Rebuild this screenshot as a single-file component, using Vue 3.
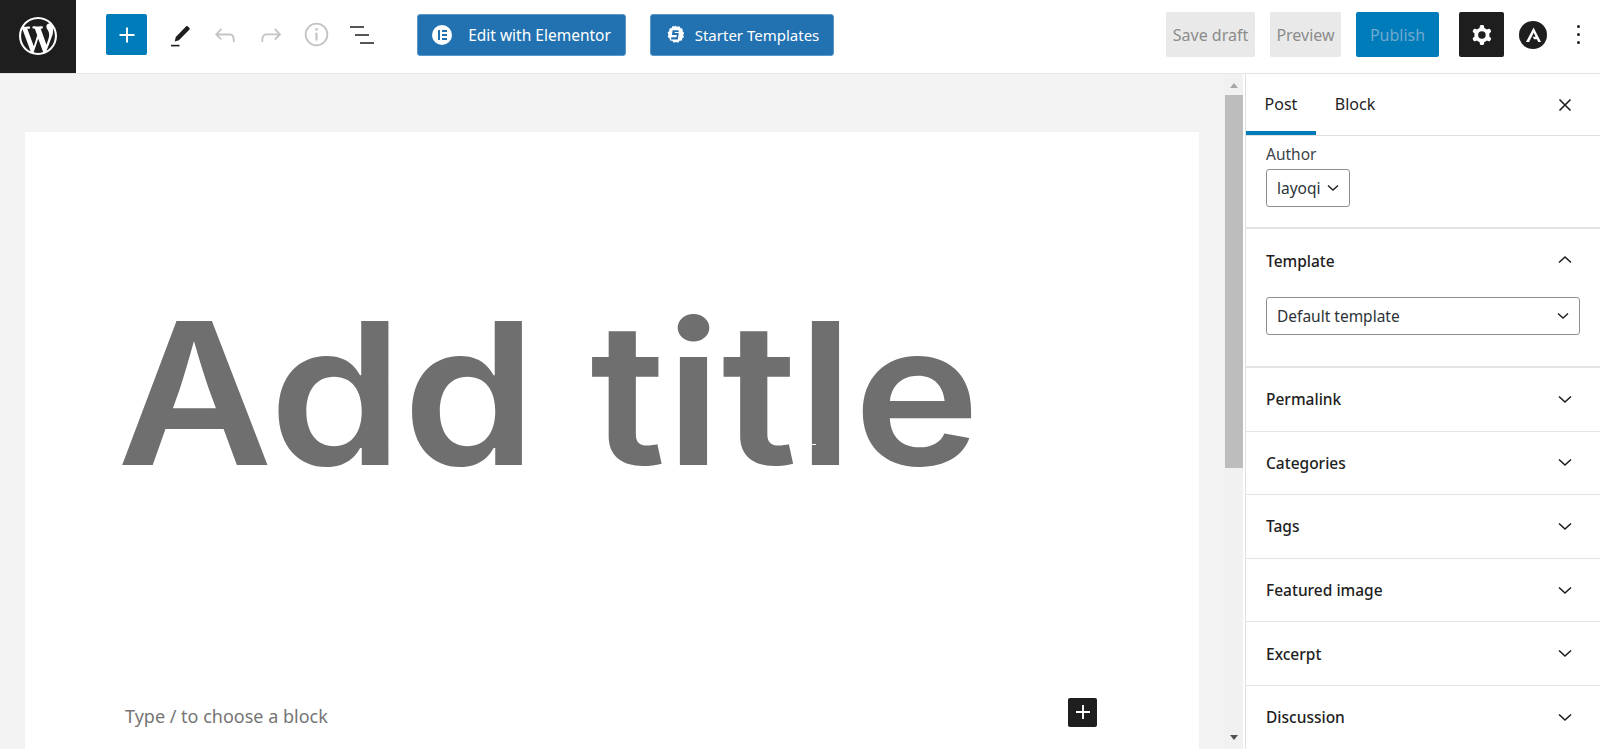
<template>
  <div class="editor">
    <header class="toolbar">
      <div class="left">
        <div class="wp">
          <svg viewBox="0 0 20 20" width="38" height="38" fill="#fff"><path :d="wpLogo" /></svg>
        </div>
        <button class="add">
          <svg viewBox="0 0 24 24" width="30" height="30" fill="#fff"><path d="M18 11.2h-5.2V6h-1.6v5.2H6v1.6h5.2V18h1.6v-5.2H18z" /></svg>
        </button>
        <div class="tools">
          <svg viewBox="0 0 24 24" width="24" height="28"><path d="M19.6 3.2l1.9 1.9c.4.4.4 1 0 1.4L10.9 17.2l-4.2 1.2 1.1-4.3L18.2 3.2c.4-.4 1-.4 1.4 0z" fill="#1e1e1e" /><path d="M3 22.6h8.5" stroke="#1e1e1e" stroke-width="1.6" fill="none" /></svg>
          <svg viewBox="0 0 24 24" width="30" height="30" fill="#c4c4c4"><path d="M18.3 11.7c-.6-.6-1.4-.9-2.3-.9H6.7l2.9-3.3-1.1-1-4.5 5L8.5 16l1-1-2.7-2.7H16c.5 0 .9.2 1.3.5 1 1 1 3.4 1 4.5v.3h1.5v-.2c0-1.5 0-4.3-1.5-5.7z" /></svg>
          <svg viewBox="0 0 24 24" width="30" height="30" fill="#c4c4c4"><path d="M15.6 6.5l-1.1 1 2.9 3.3H8c-.9 0-1.7.3-2.3.9-1.4 1.5-1.4 4.2-1.4 5.6v.2h1.5v-.3c0-1.1 0-3.5 1-4.5.3-.3.7-.5 1.3-.5h9.2L14.5 15l1.1 1.1 4.6-4.6-4.6-5z" /></svg>
          <svg viewBox="0 0 24 24" width="29" height="29" fill="none" stroke="#c4c4c4" stroke-width="1.5"><circle cx="12" cy="12" r="9" /><path d="M12 10.5v6.5" stroke-width="1.8" /><path d="M12 6.6v2.2" stroke-width="2" /></svg>
          <svg viewBox="0 0 24 20" width="24" height="20" fill="none" stroke="#1e1e1e" stroke-width="1.6"><path d="M0 2h14M5 10h14M10 18h14" /></svg>
        </div>
        <button class="ext first">
          <span class="el-icon"><i></i><b></b></span>
          <span>Edit with Elementor</span>
        </button>
        <button class="ext second">
          <svg viewBox="0 0 20 20" width="20" height="20"><path d="M10 .5l2 1.2 2.4-.5 1 1.9 2.3.8-.1 2.3 1.6 1.7-1.2 2 1.2 2-1.9 1.4-.3 2.3-2.4.2-1.4 1.9-2.2-.8-2.2.8-1.5-1.9-2.3-.3-.5-2.3-1.9-1.4.9-2.1-.9-2.1 1.7-1.6V3.7l2.3-.6 1-2 2.4.5z" fill="#fff" /><path d="M13.8 5.2H7.6L6.9 10h4.9l-.3 2.2H6.4l-.4 2.4h6.8l1-6.7H9.6l.2-1h3.7z" fill="#2271b1" /></svg>
          <span>Starter Templates</span>
        </button>
      </div>
      <div class="right">
        <button class="muted draft">Save draft</button>
        <button class="muted preview">Preview</button>
        <button class="publish">Publish</button>
        <button class="gear">
          <svg viewBox="0 0 24 24" width="30" height="30" fill="#fff"><path fill-rule="evenodd" d="M10.289 4.836A1 1 0 0111.275 4h1.306a1 1 0 01.987.836l.244 1.466c.787.26 1.503.679 2.108 1.218l1.393-.522a1 1 0 011.216.437l.653 1.13a1 1 0 01-.23 1.273l-1.148.944a6.025 6.025 0 010 2.435l1.149.946a1 1 0 01.23 1.272l-.653 1.13a1 1 0 01-1.216.437l-1.394-.522c-.605.54-1.32.958-2.108 1.218l-.244 1.466a1 1 0 01-.987.836h-1.306a1 1 0 01-.986-.836l-.244-1.466a5.995 5.995 0 01-2.108-1.218l-1.394.522a1 1 0 01-1.217-.436l-.653-1.131a1 1 0 01.23-1.272l1.149-.946a6.026 6.026 0 010-2.435l-1.148-.944a1 1 0 01-.23-1.272l.653-1.131a1 1 0 011.217-.437l1.393.522a5.994 5.994 0 012.108-1.218l.244-1.466zM14.929 12a3 3 0 11-6 0 3 3 0 016 0z" /></svg>
        </button>
        <svg class="astra" viewBox="0 0 28 28" width="28" height="28"><circle cx="14" cy="14" r="14" fill="#1e1e1e" /><path d="M14.6 6.6L7 21h3.1l4.6-9.2 1.9 3.9h-2.9l1.4 2.6h2.8l1.3 2.7H22z" fill="#fff" /></svg>
        <div class="kebab"><i></i><i></i><i></i></div>
      </div>
    </header>

    <div class="body">
      <main class="content">
        <section class="canvas">
          <h1 class="title">Add title</h1>
          <i class="caret"></i>
          <div class="block-row">
            <span class="hint">Type / to choose a block</span>
            <button class="inline-add">
              <svg viewBox="0 0 24 24" width="28" height="28" fill="#fff"><path d="M18 11.2h-5.2V6h-1.6v5.2H6v1.6h5.2V18h1.6v-5.2H18z" /></svg>
            </button>
          </div>
        </section>
      </main>

      <div class="scrollbar">
        <i class="arrow up"></i>
        <div class="thumb"></div>
        <i class="arrow down"></i>
      </div>

      <aside class="sidebar">
        <div class="tabs">
          <div class="tab active">Post</div>
          <div class="tab">Block</div>
          <svg class="close" viewBox="0 0 24 24" width="24" height="24" fill="none" stroke="#1e1e1e" stroke-width="1.6"><path d="M6.5 6.5l11 11M17.5 6.5l-11 11" /></svg>
        </div>

        <div class="author">
          <div class="lbl">Author</div>
          <div class="select small-select">
            <span>layoqi</span>
            <svg viewBox="0 0 12 8" width="12" height="8" fill="none" stroke="#1e1e1e" stroke-width="1.4"><path :d="chevDown" /></svg>
          </div>
        </div>

        <div class="template">
          <div class="sec-head">
            <span>Template</span>
            <svg viewBox="0 0 14 9" width="14" height="9" fill="none" stroke="#1e1e1e" stroke-width="1.6"><path d="M1 7.5l6-5.5 6 5.5" /></svg>
          </div>
          <div class="select wide-select">
            <span>Default template</span>
            <svg viewBox="0 0 12 8" width="12" height="8" fill="none" stroke="#1e1e1e" stroke-width="1.4"><path :d="chevDown" /></svg>
          </div>
        </div>

        <div v-for="s in sections" :key="s" class="row">
          <span>{{ s }}</span>
          <svg viewBox="0 0 14 9" width="14" height="9" fill="none" stroke="#1e1e1e" stroke-width="1.6"><path d="M1 1.5l6 5.5 6-5.5" /></svg>
        </div>
      </aside>
    </div>
  </div>
</template>

<script setup>
const sections = ["Permalink", "Categories", "Tags", "Featured image", "Excerpt", "Discussion"];
const chevDown = "M1 1.5l5 4.5 5-4.5";
const wpLogo = "M20 10c0-5.51-4.49-10-10-10C4.48 0 0 4.49 0 10c0 5.52 4.48 10 10 10 5.51 0 10-4.48 10-10zM7.78 15.37L4.37 6.22c.55-.02 1.17-.08 1.17-.08.5-.06.44-1.13-.06-1.11 0 0-1.45.11-2.37.11-.18 0-.37 0-.58-.01C4.12 2.69 6.87 1.11 10 1.11c2.33 0 4.45.87 6.05 2.34-.68-.11-1.65.39-1.65 1.58 0 .74.45 1.36.9 2.1.35.61.55 1.36.55 2.46 0 1.49-1.4 5-1.4 5l-3.03-8.37c.54-.02.82-.17.82-.17.5-.05.44-1.25-.06-1.22 0 0-1.44.12-2.38.12-.87 0-2.33-.12-2.33-.12-.5-.03-.56 1.2-.06 1.22l.92.08 1.26 3.41zM17.41 10c.24-.64.74-1.87.43-4.25.7 1.29 1.05 2.71 1.05 4.25 0 3.29-1.73 6.24-4.4 7.78.97-2.59 1.94-5.2 2.92-7.78zM6.1 18.09C3.12 16.65 1.11 13.53 1.11 10c0-1.3.23-2.48.72-3.59C3.25 10.3 4.67 14.2 6.1 18.09zm4.03-6.63l2.58 6.98c-.86.29-1.76.45-2.71.45-.79 0-1.57-.11-2.29-.33.81-2.38 1.62-4.74 2.42-7.1z";
</script>

<style>
html, body { margin: 0; overflow: hidden; background: #fff; }
</style>

<style scoped>
.editor { width: 1600px; height: 749px; display: flex; flex-direction: column; overflow: hidden; font-family: "Noto Sans", "Open Sans", sans-serif; color: #1e1e1e; }
button { font-family: inherit; border: 0; padding: 0; display: flex; align-items: center; justify-content: center; }

.toolbar { height: 73px; flex: none; display: flex; justify-content: space-between; align-items: flex-start; border-bottom: 1px solid #e4e4e4; background: #fff; }
.left, .right { display: flex; align-items: center; height: 69px; }
.wp { width: 76px; height: 73px; background: #1e1e1e; display: flex; align-items: center; justify-content: center; align-self: flex-start; padding-bottom: 2px; box-sizing: border-box; }
.add { width: 41px; height: 41px; margin-left: 30px; background: #007cba; border-radius: 2px; }
.tools { display: grid; grid-template-columns: repeat(5, 45.5px); justify-items: center; align-items: center; width: 255px; padding-left: 10px; box-sizing: border-box; }

.ext { height: 42px; background: #2271b1; border: 1px solid #5b97c7; border-radius: 3px; color: #fff; font-size: 15.5px; box-sizing: border-box; }
.first { width: 209px; margin-left: 15px; gap: 16px; }
.second { width: 184px; margin-left: 24px; gap: 10px; font-size: 15px; }
.el-icon { width: 20px; height: 20px; border-radius: 50%; background: #fff; position: relative; }
.el-icon i { position: absolute; left: 6px; top: 5px; width: 2px; height: 10px; background: #2271b1; }
.el-icon b { position: absolute; left: 10px; top: 5px; width: 5px; height: 2px; background: #2271b1; box-shadow: 0 4px 0 #2271b1, 0 8px 0 #2271b1; }

.right button { height: 45px; font-size: 16px; border-radius: 2px; box-sizing: border-box; }
.muted { background: #e9e9e9; color: #8c8c8c; }
.draft { width: 89px; }
.preview { width: 71px; margin-left: 15px; }
.publish { width: 83px; margin-left: 15px; background: #007cba; color: #71a9cf; }
.right .gear { width: 45px; margin-left: 20px; background: #1e1e1e; }
.astra { margin-left: 15px; flex: none; }
.kebab { width: 53px; display: flex; flex-direction: column; align-items: flex-start; gap: 5px; padding-left: 30px; box-sizing: border-box; }
.kebab i { width: 3px; height: 3px; border-radius: 50%; background: #1e1e1e; }

.body { flex: 1; display: flex; min-height: 0; }
.content { flex: 1; background: #f3f3f3; padding: 58px 25px 0; min-width: 0; box-sizing: border-box; }
.canvas { background: #fff; height: 100%; position: relative; padding-top: 141px; box-sizing: border-box; display: flex; flex-direction: column; }
.title { margin: 0; padding-left: 92px; font-family: Inter, sans-serif; font-size: 198px; line-height: 240px; font-weight: 600; color: #6f6f6f; white-space: nowrap; height: 240px; transform: scaleX(1.08); transform-origin: 92px 0; }
.caret { position: absolute; left: 785px; top: 312px; width: 6px; height: 1px; background: #fff; }
.block-row { display: flex; align-items: center; justify-content: space-between; padding: 0 102px 0 100px; margin-top: 184px; height: 30px; }
.hint { font-size: 18px; color: #757575; padding-top: 8px; }
.inline-add { width: 29px; height: 29px; background: #1e1e1e; border-radius: 2px; }

.scrollbar { width: 19px; margin-right: 2px; background: #f1f1f1; display: flex; flex-direction: column; align-items: center; flex: none; }
.thumb { width: 18px; height: 373px; background: #bdbdbd; margin-top: 7px; }
.arrow { width: 0; height: 0; border-left: 4px solid transparent; border-right: 4px solid transparent; }
.arrow.up { border-bottom: 5px solid #a8a8a8; margin-top: 9px; }
.arrow.down { border-top: 5px solid #505050; margin-top: auto; margin-bottom: 9px; }

.sidebar { width: 355px; flex: none; border-left: 1px solid #e0e0e0; box-sizing: border-box; background: #fff; font-size: 15.5px; overflow: hidden; }
.tabs { height: 61px; display: flex; align-items: flex-end; border-bottom: 1px solid #e0e0e0; position: relative; }
.tab { width: 70px; height: 61px; box-sizing: border-box; text-align: center; line-height: 60px; font-size: 16px; }
.tab.active { border-bottom: 4px solid #007cba; }
.tab + .tab { width: 78px; }
.close { position: absolute; right: 23px; top: 19px; }
.author { height: 93px; box-sizing: border-box; padding: 6px 20px 0; border-bottom: 2px solid #e4e4e4; }
.lbl { font-size: 15.5px; line-height: 25px; color: #3c434a; }
.select { height: 38px; border: 1px solid #8c8f94; border-radius: 3px; box-sizing: border-box; display: flex; align-items: center; justify-content: space-between; padding: 0 10px; color: #2c3338; font-size: 15.5px; }
.small-select { width: 84px; margin-top: 2px; }
.wide-select { width: 314px; margin: 4px 0 0; }
.template { height: 139px; box-sizing: border-box; padding: 0 20px; border-bottom: 2px solid #e4e4e4; }
.sec-head { height: 64px; display: flex; align-items: center; justify-content: space-between; font-weight: 500; }
.sec-head svg { margin-right: 8px; margin-top: -4px; }
.row { height: 63.6px; box-sizing: border-box; padding: 0 28px 0 20px; display: flex; align-items: center; justify-content: space-between; border-bottom: 1px solid #e4e4e4; font-weight: 500; }
</style>
